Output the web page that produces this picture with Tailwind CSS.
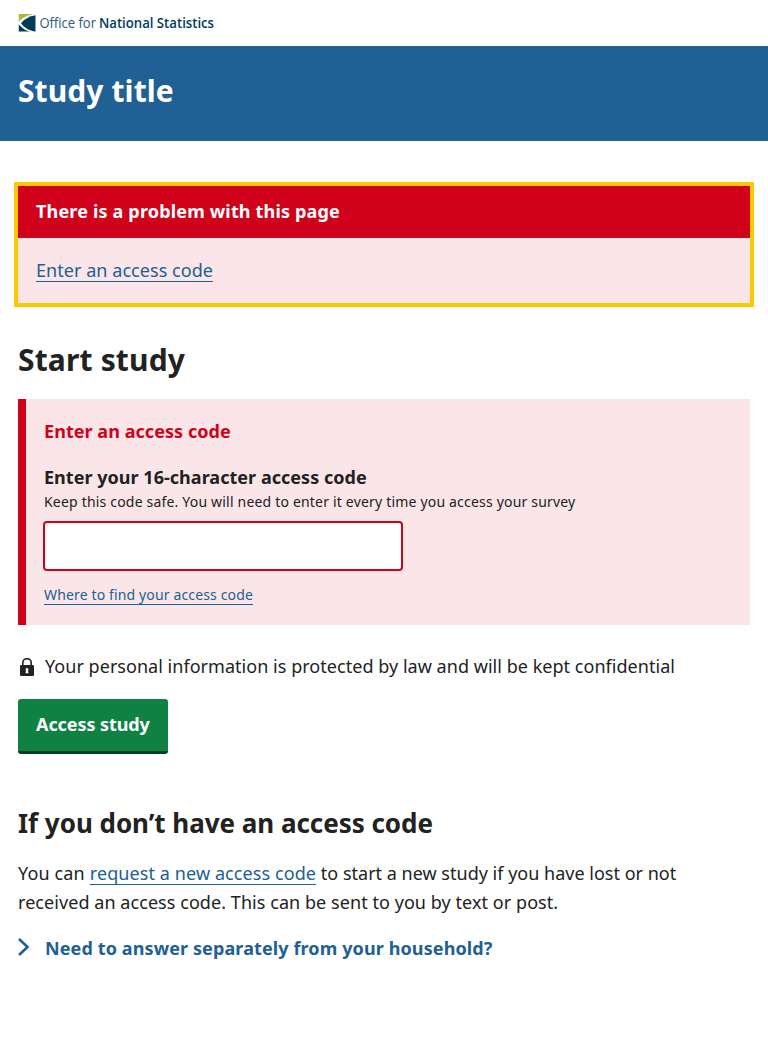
<!DOCTYPE html>
<html lang="en">
<head>
<meta charset="utf-8">
<title>Study title</title>
<script src="https://cdn.jsdelivr.net/npm/@tailwindcss/browser@4"></script>
</head>
<body class="bg-white font-['Noto_Sans',sans-serif] text-[18px] leading-[28.8px] text-[#222222] antialiased">
<header>
  <div class="h-[46px] px-[18px] pt-[10px]">
    <svg class="block" width="200" height="26" viewBox="0 -4 200 26" role="img" aria-label="Office for National Statistics">
      <path d="M.8 0H17.500C11 .6 4.500 3.200 .8 8z" fill="#a8bd3a"/>
      <path d="M17.500 1.200V17.500C11 16.800 6 13.500 3 9.200C6.500 4.800 11.500 2 17.500 1.200z" fill="#003c57"/>
      <path d="M.8 10.300C3.500 14 7 16.400 12 17.500H.8z" fill="#003c57"/>
      <g font-family="'Open Sans','Noto Sans',sans-serif" font-size="15" fill="#003c57">
        <text x="21.500" y="14" textLength="56.500" lengthAdjust="spacingAndGlyphs" font-weight="400" fill="#2c5d75">Office for</text>
        <text x="81" y="14" textLength="115" lengthAdjust="spacingAndGlyphs" font-weight="600">National Statistics</text>
      </g>
    </svg>
  </div>
  <div class="h-[95px] bg-[#206095] px-[18px] pt-[25px]">
    <h1 class="text-[30px] leading-[40px] font-bold tracking-[0.09px] text-white">Study title</h1>
  </div>
</header>
<main class="px-[18px] pt-[45px]">
  <section class="h-[117px] bg-[#fae6e8] outline-4 outline-[#fbc900]">
    <h2 class="h-[52px] bg-[#d0021b] px-[18px] pt-[11px] font-bold tracking-[0.17px] text-white">There is a problem with this page</h2>
    <p class="px-[18px] pt-[18px]"><a href="#code" class="inline-block h-[26px] border-b border-[#206095] tracking-[0.05px] text-[#206095]">Enter an access code</a></p>
  </section>
  <h2 class="mt-[37px] text-[30px] leading-[40px] font-bold tracking-[0.15px]">Start study</h2>
  <section class="mt-[19px] h-[226px] border-l-8 border-[#d0021b] bg-[#fae6e8] px-[18px] pt-[18px]">
    <p class="font-bold tracking-[0.05px] text-[#d0021b]">Enter an access code</p>
    <label for="code" class="mt-[17px] block font-bold tracking-[0.03px]">Enter your 16-character access code</label>
    <p class="text-[14px] leading-[20px] tracking-[0.19px]">Keep this code safe. You will need to enter it every time you access your survey</p>
    <input id="code" class="mt-[9px] -ml-px block h-[50px] w-[360px] rounded-[4px] border-2 border-[#d0021b] bg-white px-2">
    <a href="#help" class="mt-[14px] inline-block h-[20px] border-b border-[#206095] text-[14px] leading-[20px] tracking-[0.14px] text-[#206095]">Where to find your access code</a>
  </section>
  <div class="mt-[27px] flex h-[29px] items-center">
    <svg class="mr-[9px]" width="18" height="18" viewBox="0 0 18 18">
      <path d="M4.800 8V4.800a4.200 4.200 0 0 1 8.400 0V8" fill="none" stroke="#222" stroke-width="1.600"/>
      <rect x="2" y="7" width="14" height="11" rx="1.200" fill="#222"/>
      <path d="M9 10a1.600 1.600 0 0 1 1 2.700l.5 2.600h-3l.5-2.600A1.600 1.600 0 0 1 9 10z" fill="#fff"/>
    </svg>
    <p class="tracking-[0.035px]">Your personal information is protected by law and will be kept confidential</p>
  </div>
  <button class="mt-[18px] block h-[55px] rounded-[3px] border-b-3 border-[#073d20] bg-[#0f8243] px-[18px] pb-[2px] font-bold tracking-[-0.08px] text-white">Access study</button>
  <h2 class="mt-[51px] text-[26px] leading-[36px] font-bold tracking-[-0.03px]">If you don’t have an access code</h2>
  <p class="mt-[18px] tracking-[0.06px]"><span class="tracking-[0.15px]">You can </span><a href="#new" class="tracking-[0.09px] text-[#206095] underline decoration-1 underline-offset-4 [text-decoration-skip-ink:none]">request a new access code</a><span class="tracking-[0.01px]"> to start a new study if you have lost or not</span><br>received an access code. This can be sent to you by text or post.</p>
  <div class="mt-[17px] flex items-center text-[#206095]">
    <svg class="mr-[15px] -mt-[2px]" width="12" height="18" viewBox="0 0 12 18"><path d="M1 1l8.500 8L1 17" fill="none" stroke="#206095" stroke-width="2.600"/></svg>
    <h3 class="font-bold tracking-[0.11px]">Need to answer separately from your household?</h3>
  </div>
</main>
</body>
</html>
